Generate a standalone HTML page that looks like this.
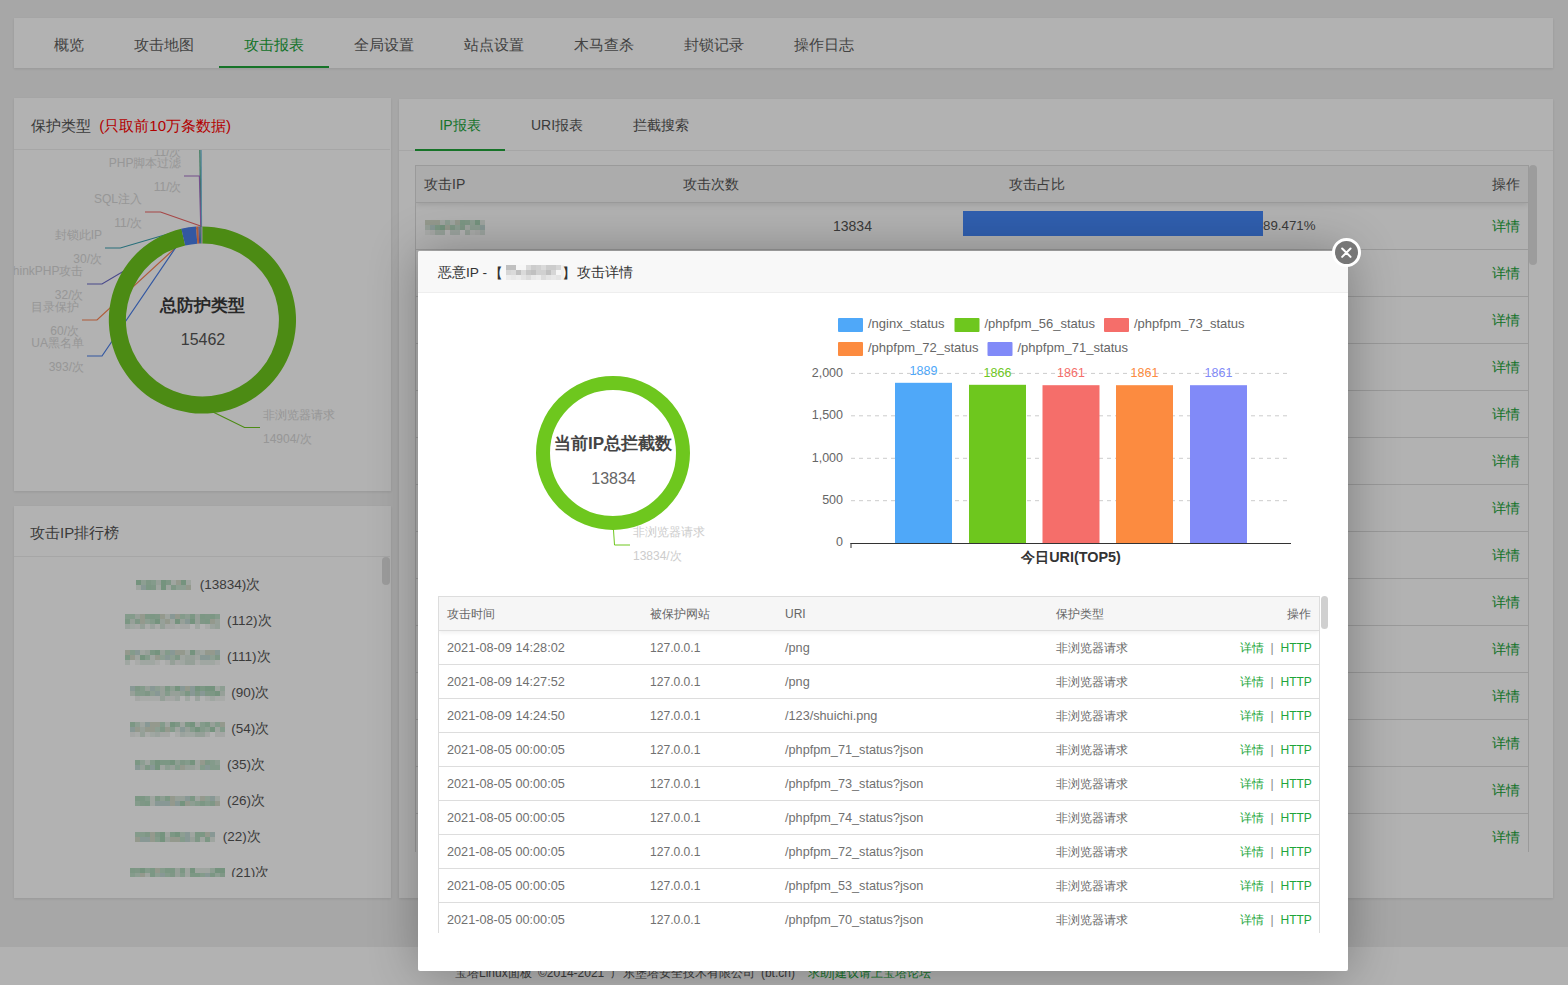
<!DOCTYPE html><html><head><meta charset="utf-8"><style>
*{box-sizing:border-box;margin:0;padding:0}
html,body{width:1568px;height:985px;overflow:hidden}
body{background:#f0f0f0;font-family:"Liberation Sans",sans-serif;color:#555;position:relative}
.abs{position:absolute}
.card{position:absolute;background:#fff;box-shadow:0 1px 3px rgba(0,0,0,.1)}
.nt{position:absolute;top:18px;height:50px;line-height:54px;font-size:15px;color:#606060;text-align:center;white-space:nowrap}
.on{color:#20a53a}
.hd{position:absolute;left:0;right:0;top:0;border-bottom:1px solid #eee}
.ht{position:absolute;font-size:15px;color:#555;white-space:nowrap;line-height:20px}
.red{color:#f00}
.lbl{position:absolute;font-size:12px;color:#d8d8d8;white-space:nowrap;line-height:14px}
.rk{position:absolute;font-size:13.5px;color:#555;line-height:20px;white-space:nowrap}
.bl{position:absolute}
.bl i{position:absolute;display:block}
.tx{position:absolute;white-space:nowrap}
.g{color:#20a53a}
.overlay{position:absolute;left:0;top:0;width:1568px;height:985px;background:rgba(0,0,0,.3)}
</style></head><body>
<div class="card" style="left:14px;top:18px;width:1539px;height:50px"></div>
<div class="nt" style="left:14px;width:110px">概览</div>
<div class="nt" style="left:109px;width:110px">攻击地图</div>
<div class="nt on" style="left:219px;width:110px">攻击报表</div>
<div class="nt" style="left:329px;width:110px">全局设置</div>
<div class="nt" style="left:439px;width:110px">站点设置</div>
<div class="nt" style="left:549px;width:110px">木马查杀</div>
<div class="nt" style="left:659px;width:110px">封锁记录</div>
<div class="nt" style="left:769px;width:110px">操作日志</div>
<div class="abs" style="left:219px;top:66px;width:110px;height:2px;background:#20a53a"></div>
<div class="card" style="left:14px;top:98px;width:376.5px;height:393px"></div>
<div class="abs" style="left:14px;top:149px;width:376px;height:1px;background:#eee"></div>
<div class="ht" style="left:31px;top:115.5px">保护类型&nbsp;&nbsp;<span class="red">(只取前10万条数据)</span></div>
<svg class="abs" style="left:14px;top:150px" width="376" height="340" viewBox="14 150 376 340">
<polyline points="199.9,150 201.0,227" fill="none" stroke="#3ba272" stroke-width="1.2"/>
<polyline points="201.1,150 201.5,227" fill="none" stroke="#73c0de" stroke-width="1.2"/>
<polyline points="184,176 199.4,176 200.8,227" fill="none" stroke="#a673c8" stroke-width="1.2"/>
<polyline points="145,212 160.5,212 200.6,226" fill="none" stroke="#ee6666" stroke-width="1.2"/>
<polyline points="105,248 120.3,248 185,229" fill="none" stroke="#3ba0b0" stroke-width="1.2"/>
<polyline points="87,284 102,284 195,229" fill="none" stroke="#6a6ac8" stroke-width="1.2"/>
<polyline points="82,320 97,320 197,228" fill="none" stroke="#fc8452" stroke-width="1.2"/>
<polyline points="87,356 102,356 189,228" fill="none" stroke="#4a7ee8" stroke-width="1.2"/>
<polyline points="213,412 244.5,427.5 260,427.5" fill="none" stroke="#6ec71e" stroke-width="1.2"/>
<path d="M202.40,226.40 A93.6,93.6 0 1 1 181.36,228.80 L185.20,245.46 A76.5,76.5 0 1 0 202.40,243.50 Z" fill="#6ec71e"/>
<path d="M181.36,228.80 A93.6,93.6 0 0 1 196.13,226.61 L197.27,243.67 A76.5,76.5 0 0 0 185.20,245.46 Z" fill="#4a7ee8"/>
<path d="M196.13,226.61 A93.6,93.6 0 0 1 198.41,226.49 L199.14,243.57 A76.5,76.5 0 0 0 197.27,243.67 Z" fill="#fc8452"/>
<path d="M198.41,226.49 A93.6,93.6 0 0 1 199.62,226.44 L200.13,243.53 A76.5,76.5 0 0 0 199.14,243.57 Z" fill="#6a6ac8"/>
<path d="M199.62,226.44 A93.6,93.6 0 0 1 200.76,226.41 L201.06,243.51 A76.5,76.5 0 0 0 200.13,243.53 Z" fill="#3ba0b0"/>
<path d="M200.76,226.41 A93.6,93.6 0 0 1 201.18,226.41 L201.41,243.51 A76.5,76.5 0 0 0 201.06,243.51 Z" fill="#ee6666"/>
<path d="M201.18,226.41 A93.6,93.6 0 0 1 201.60,226.40 L201.75,243.50 A76.5,76.5 0 0 0 201.41,243.51 Z" fill="#9a60b4"/>
<path d="M201.60,226.40 A93.6,93.6 0 0 1 202.02,226.40 L202.09,243.50 A76.5,76.5 0 0 0 201.75,243.50 Z" fill="#73c0de"/>
<path d="M202.02,226.40 A93.6,93.6 0 0 1 202.40,226.40 L202.40,243.50 A76.5,76.5 0 0 0 202.09,243.50 Z" fill="#91cc75"/>
</svg>
<div class="tx" style="left:102.6px;top:295px;width:200px;text-align:center;font-size:17px;font-weight:bold;color:#3a3a3a;line-height:22px">总防护类型</div>
<div class="tx" style="left:103px;top:331px;width:200px;text-align:center;font-size:16px;color:#555;line-height:18px">15462</div>
<div class="abs" style="left:14px;top:0;width:376px;height:491px;overflow:hidden">
<div class="lbl" style="right:208.5px;top:145.0px">11/次</div>
<div class="lbl" style="right:208.5px;top:156.0px">PHP脚本过滤</div>
<div class="lbl" style="right:208.5px;top:180.0px">11/次</div>
<div class="lbl" style="right:248.0px;top:192.0px">SQL注入</div>
<div class="lbl" style="right:248.0px;top:216.0px">11/次</div>
<div class="lbl" style="right:288.0px;top:228.0px">封锁此IP</div>
<div class="lbl" style="right:288.0px;top:252.0px">30/次</div>
<div class="lbl" style="right:306.5px;top:264.0px">ThinkPHP攻击</div>
<div class="lbl" style="right:306.5px;top:288.0px">32/次</div>
<div class="lbl" style="right:311.0px;top:300.0px">目录保护</div>
<div class="lbl" style="right:311.0px;top:324.0px">60/次</div>
<div class="lbl" style="right:306.0px;top:335.5px">UA黑名单</div>
<div class="lbl" style="right:306.0px;top:360.0px">393/次</div>
</div>
<div class="lbl" style="left:263px;top:408px">非浏览器请求</div>
<div class="lbl" style="left:263px;top:432px">14904/次</div>
<div class="abs" style="left:14px;top:98px;width:376px;height:51px;background:#fff"></div>
<div class="ht" style="left:31px;top:115.5px">保护类型&nbsp;&nbsp;<span class="red">(只取前10万条数据)</span></div>
<div class="abs" style="left:14px;top:149px;width:376px;height:1px;background:#eee"></div>
<div class="card" style="left:14px;top:506px;width:376.5px;height:392px"></div>
<div class="abs" style="left:14px;top:556px;width:376px;height:1px;background:#eee"></div>
<div class="ht" style="left:30px;top:523px">攻击IP排行榜</div>
<div class="abs" style="left:14px;top:557px;width:376px;height:320px;overflow:hidden">
<div class="bl" style="left:122.0px;top:23.0px;width:54.0px;height:10px"><i style="left:0px;top:0px;width:5px;height:5px;background:#a8d3b5"></i><i style="left:0px;top:5px;width:5px;height:5px;background:#e4ece6"></i><i style="left:5px;top:0px;width:5px;height:5px;background:#cbe3d2"></i><i style="left:5px;top:5px;width:5px;height:5px;background:#c3dad6"></i><i style="left:10px;top:0px;width:5px;height:5px;background:#b6d9c0"></i><i style="left:10px;top:5px;width:5px;height:5px;background:#b2d9be"></i><i style="left:15px;top:0px;width:5px;height:5px;background:#bddfc8"></i><i style="left:15px;top:5px;width:5px;height:5px;background:#b6d9c0"></i><i style="left:20px;top:0px;width:5px;height:5px;background:#d8e6dc"></i><i style="left:20px;top:5px;width:5px;height:5px;background:#e4ece6"></i><i style="left:25px;top:0px;width:5px;height:5px;background:#a8d3b5"></i><i style="left:25px;top:5px;width:5px;height:5px;background:#a8d3b5"></i><i style="left:30px;top:0px;width:5px;height:5px;background:#b6d9c0"></i><i style="left:30px;top:5px;width:5px;height:5px;background:#e4ece6"></i><i style="left:35px;top:0px;width:5px;height:5px;background:#e4ece6"></i><i style="left:35px;top:5px;width:5px;height:5px;background:#b6d9c0"></i><i style="left:40px;top:0px;width:5px;height:5px;background:#d5dccb"></i><i style="left:40px;top:5px;width:5px;height:5px;background:#cbe3d2"></i><i style="left:45px;top:0px;width:5px;height:5px;background:#a8d3b5"></i><i style="left:45px;top:5px;width:5px;height:5px;background:#cbe3d2"></i><i style="left:50px;top:0px;width:5px;height:5px;background:#e4ece6"></i><i style="left:50px;top:5px;width:5px;height:5px;background:#d5dccb"></i></div>
<div class="rk" style="left:185.8px;top:18px">(13834)次</div>
<div class="bl" style="left:111.0px;top:56.5px;width:95.0px;height:15px"><i style="left:0px;top:0px;width:5px;height:5px;background:#bddfc8"></i><i style="left:0px;top:5px;width:5px;height:5px;background:#b2d9be"></i><i style="left:0px;top:10px;width:5px;height:5px;background:#dfeae2"></i><i style="left:5px;top:0px;width:5px;height:5px;background:#bddfc8"></i><i style="left:5px;top:5px;width:5px;height:5px;background:#d8e6dc"></i><i style="left:5px;top:10px;width:5px;height:5px;background:#e6efe8"></i><i style="left:10px;top:0px;width:5px;height:5px;background:#d8e6dc"></i><i style="left:10px;top:5px;width:5px;height:5px;background:#b6d9c0"></i><i style="left:10px;top:10px;width:5px;height:5px;background:#ecf0ec"></i><i style="left:15px;top:0px;width:5px;height:5px;background:#d5dccb"></i><i style="left:15px;top:5px;width:5px;height:5px;background:#d5dccb"></i><i style="left:15px;top:10px;width:5px;height:5px;background:#d6e6da"></i><i style="left:20px;top:0px;width:5px;height:5px;background:#b6d9c0"></i><i style="left:20px;top:5px;width:5px;height:5px;background:#cbe3d2"></i><i style="left:20px;top:10px;width:5px;height:5px;background:#f2f5f2"></i><i style="left:25px;top:0px;width:5px;height:5px;background:#b2d9be"></i><i style="left:25px;top:5px;width:5px;height:5px;background:#bddfc8"></i><i style="left:25px;top:10px;width:5px;height:5px;background:#dfeae2"></i><i style="left:30px;top:0px;width:5px;height:5px;background:#b6d9c0"></i><i style="left:30px;top:5px;width:5px;height:5px;background:#a8d3b5"></i><i style="left:30px;top:10px;width:5px;height:5px;background:#f2f5f2"></i><i style="left:35px;top:0px;width:5px;height:5px;background:#d5dccb"></i><i style="left:35px;top:5px;width:5px;height:5px;background:#d8e6dc"></i><i style="left:35px;top:10px;width:5px;height:5px;background:#d6e6da"></i><i style="left:40px;top:0px;width:5px;height:5px;background:#e4ece6"></i><i style="left:40px;top:5px;width:5px;height:5px;background:#d5dccb"></i><i style="left:40px;top:10px;width:5px;height:5px;background:#ecf0ec"></i><i style="left:45px;top:0px;width:5px;height:5px;background:#c3dad6"></i><i style="left:45px;top:5px;width:5px;height:5px;background:#e4ece6"></i><i style="left:45px;top:10px;width:5px;height:5px;background:#ecf0ec"></i><i style="left:50px;top:0px;width:5px;height:5px;background:#d5dccb"></i><i style="left:50px;top:5px;width:5px;height:5px;background:#a8d3b5"></i><i style="left:50px;top:10px;width:5px;height:5px;background:#f2f5f2"></i><i style="left:55px;top:0px;width:5px;height:5px;background:#bddfc8"></i><i style="left:55px;top:5px;width:5px;height:5px;background:#d8e6dc"></i><i style="left:55px;top:10px;width:5px;height:5px;background:#ecf0ec"></i><i style="left:60px;top:0px;width:5px;height:5px;background:#cbe3d2"></i><i style="left:60px;top:5px;width:5px;height:5px;background:#c3dad6"></i><i style="left:60px;top:10px;width:5px;height:5px;background:#ecf0ec"></i><i style="left:65px;top:0px;width:5px;height:5px;background:#b2d9be"></i><i style="left:65px;top:5px;width:5px;height:5px;background:#a8d3b5"></i><i style="left:65px;top:10px;width:5px;height:5px;background:#ffffff"></i><i style="left:70px;top:0px;width:5px;height:5px;background:#d8e6dc"></i><i style="left:70px;top:5px;width:5px;height:5px;background:#d8e6dc"></i><i style="left:70px;top:10px;width:5px;height:5px;background:#e6efe8"></i><i style="left:75px;top:0px;width:5px;height:5px;background:#b2d9be"></i><i style="left:75px;top:5px;width:5px;height:5px;background:#b6d9c0"></i><i style="left:75px;top:10px;width:5px;height:5px;background:#ffffff"></i><i style="left:80px;top:0px;width:5px;height:5px;background:#b6d9c0"></i><i style="left:80px;top:5px;width:5px;height:5px;background:#b2d9be"></i><i style="left:80px;top:10px;width:5px;height:5px;background:#f2f5f2"></i><i style="left:85px;top:0px;width:5px;height:5px;background:#b2d9be"></i><i style="left:85px;top:5px;width:5px;height:5px;background:#d5dccb"></i><i style="left:85px;top:10px;width:5px;height:5px;background:#dfeae2"></i><i style="left:90px;top:0px;width:5px;height:5px;background:#bddfc8"></i><i style="left:90px;top:5px;width:5px;height:5px;background:#d8e6dc"></i><i style="left:90px;top:10px;width:5px;height:5px;background:#d6e6da"></i></div>
<div class="rk" style="left:213px;top:54px">(112)次</div>
<div class="bl" style="left:111.0px;top:92.5px;width:95.0px;height:15px"><i style="left:0px;top:0px;width:5px;height:5px;background:#d5dccb"></i><i style="left:0px;top:5px;width:5px;height:5px;background:#b2d9be"></i><i style="left:0px;top:10px;width:5px;height:5px;background:#e6efe8"></i><i style="left:5px;top:0px;width:5px;height:5px;background:#bddfc8"></i><i style="left:5px;top:5px;width:5px;height:5px;background:#d5dccb"></i><i style="left:5px;top:10px;width:5px;height:5px;background:#ffffff"></i><i style="left:10px;top:0px;width:5px;height:5px;background:#c3dad6"></i><i style="left:10px;top:5px;width:5px;height:5px;background:#e4ece6"></i><i style="left:10px;top:10px;width:5px;height:5px;background:#f2f5f2"></i><i style="left:15px;top:0px;width:5px;height:5px;background:#e4ece6"></i><i style="left:15px;top:5px;width:5px;height:5px;background:#a8d3b5"></i><i style="left:15px;top:10px;width:5px;height:5px;background:#e6efe8"></i><i style="left:20px;top:0px;width:5px;height:5px;background:#d8e6dc"></i><i style="left:20px;top:5px;width:5px;height:5px;background:#bddfc8"></i><i style="left:20px;top:10px;width:5px;height:5px;background:#e6efe8"></i><i style="left:25px;top:0px;width:5px;height:5px;background:#b2d9be"></i><i style="left:25px;top:5px;width:5px;height:5px;background:#e4ece6"></i><i style="left:25px;top:10px;width:5px;height:5px;background:#e6efe8"></i><i style="left:30px;top:0px;width:5px;height:5px;background:#a8d3b5"></i><i style="left:30px;top:5px;width:5px;height:5px;background:#d5dccb"></i><i style="left:30px;top:10px;width:5px;height:5px;background:#f2f5f2"></i><i style="left:35px;top:0px;width:5px;height:5px;background:#d8e6dc"></i><i style="left:35px;top:5px;width:5px;height:5px;background:#cbe3d2"></i><i style="left:35px;top:10px;width:5px;height:5px;background:#ffffff"></i><i style="left:40px;top:0px;width:5px;height:5px;background:#bddfc8"></i><i style="left:40px;top:5px;width:5px;height:5px;background:#c3dad6"></i><i style="left:40px;top:10px;width:5px;height:5px;background:#f2f5f2"></i><i style="left:45px;top:0px;width:5px;height:5px;background:#c3dad6"></i><i style="left:45px;top:5px;width:5px;height:5px;background:#cbe3d2"></i><i style="left:45px;top:10px;width:5px;height:5px;background:#d6e6da"></i><i style="left:50px;top:0px;width:5px;height:5px;background:#d5dccb"></i><i style="left:50px;top:5px;width:5px;height:5px;background:#b6d9c0"></i><i style="left:50px;top:10px;width:5px;height:5px;background:#ecf0ec"></i><i style="left:55px;top:0px;width:5px;height:5px;background:#d5dccb"></i><i style="left:55px;top:5px;width:5px;height:5px;background:#e4ece6"></i><i style="left:55px;top:10px;width:5px;height:5px;background:#e6efe8"></i><i style="left:60px;top:0px;width:5px;height:5px;background:#e4ece6"></i><i style="left:60px;top:5px;width:5px;height:5px;background:#d8e6dc"></i><i style="left:60px;top:10px;width:5px;height:5px;background:#d6e6da"></i><i style="left:65px;top:0px;width:5px;height:5px;background:#a8d3b5"></i><i style="left:65px;top:5px;width:5px;height:5px;background:#d8e6dc"></i><i style="left:65px;top:10px;width:5px;height:5px;background:#d6e6da"></i><i style="left:70px;top:0px;width:5px;height:5px;background:#d8e6dc"></i><i style="left:70px;top:5px;width:5px;height:5px;background:#e4ece6"></i><i style="left:70px;top:10px;width:5px;height:5px;background:#f2f5f2"></i><i style="left:75px;top:0px;width:5px;height:5px;background:#e4ece6"></i><i style="left:75px;top:5px;width:5px;height:5px;background:#c3dad6"></i><i style="left:75px;top:10px;width:5px;height:5px;background:#e6efe8"></i><i style="left:80px;top:0px;width:5px;height:5px;background:#d5dccb"></i><i style="left:80px;top:5px;width:5px;height:5px;background:#c3dad6"></i><i style="left:80px;top:10px;width:5px;height:5px;background:#e6efe8"></i><i style="left:85px;top:0px;width:5px;height:5px;background:#d5dccb"></i><i style="left:85px;top:5px;width:5px;height:5px;background:#cbe3d2"></i><i style="left:85px;top:10px;width:5px;height:5px;background:#e6efe8"></i><i style="left:90px;top:0px;width:5px;height:5px;background:#c3dad6"></i><i style="left:90px;top:5px;width:5px;height:5px;background:#b6d9c0"></i><i style="left:90px;top:10px;width:5px;height:5px;background:#f2f5f2"></i></div>
<div class="rk" style="left:213px;top:90px">(111)次</div>
<div class="bl" style="left:115.5px;top:128.5px;width:94.9px;height:15px"><i style="left:0px;top:0px;width:5px;height:5px;background:#c3dad6"></i><i style="left:0px;top:5px;width:5px;height:5px;background:#d8e6dc"></i><i style="left:0px;top:10px;width:5px;height:5px;background:#ffffff"></i><i style="left:5px;top:0px;width:5px;height:5px;background:#b6d9c0"></i><i style="left:5px;top:5px;width:5px;height:5px;background:#bddfc8"></i><i style="left:5px;top:10px;width:5px;height:5px;background:#ecf0ec"></i><i style="left:10px;top:0px;width:5px;height:5px;background:#bddfc8"></i><i style="left:10px;top:5px;width:5px;height:5px;background:#bddfc8"></i><i style="left:10px;top:10px;width:5px;height:5px;background:#f2f5f2"></i><i style="left:15px;top:0px;width:5px;height:5px;background:#d8e6dc"></i><i style="left:15px;top:5px;width:5px;height:5px;background:#b6d9c0"></i><i style="left:15px;top:10px;width:5px;height:5px;background:#f2f5f2"></i><i style="left:20px;top:0px;width:5px;height:5px;background:#c3dad6"></i><i style="left:20px;top:5px;width:5px;height:5px;background:#cbe3d2"></i><i style="left:20px;top:10px;width:5px;height:5px;background:#f2f5f2"></i><i style="left:25px;top:0px;width:5px;height:5px;background:#cbe3d2"></i><i style="left:25px;top:5px;width:5px;height:5px;background:#c3dad6"></i><i style="left:25px;top:10px;width:5px;height:5px;background:#f2f5f2"></i><i style="left:30px;top:0px;width:5px;height:5px;background:#d8e6dc"></i><i style="left:30px;top:5px;width:5px;height:5px;background:#d8e6dc"></i><i style="left:30px;top:10px;width:5px;height:5px;background:#d6e6da"></i><i style="left:35px;top:0px;width:5px;height:5px;background:#b2d9be"></i><i style="left:35px;top:5px;width:5px;height:5px;background:#bddfc8"></i><i style="left:35px;top:10px;width:5px;height:5px;background:#ecf0ec"></i><i style="left:40px;top:0px;width:5px;height:5px;background:#cbe3d2"></i><i style="left:40px;top:5px;width:5px;height:5px;background:#d8e6dc"></i><i style="left:40px;top:10px;width:5px;height:5px;background:#ecf0ec"></i><i style="left:45px;top:0px;width:5px;height:5px;background:#a8d3b5"></i><i style="left:45px;top:5px;width:5px;height:5px;background:#d8e6dc"></i><i style="left:45px;top:10px;width:5px;height:5px;background:#dfeae2"></i><i style="left:50px;top:0px;width:5px;height:5px;background:#c3dad6"></i><i style="left:50px;top:5px;width:5px;height:5px;background:#cbe3d2"></i><i style="left:50px;top:10px;width:5px;height:5px;background:#ffffff"></i><i style="left:55px;top:0px;width:5px;height:5px;background:#d5dccb"></i><i style="left:55px;top:5px;width:5px;height:5px;background:#b2d9be"></i><i style="left:55px;top:10px;width:5px;height:5px;background:#e6efe8"></i><i style="left:60px;top:0px;width:5px;height:5px;background:#c3dad6"></i><i style="left:60px;top:5px;width:5px;height:5px;background:#c3dad6"></i><i style="left:60px;top:10px;width:5px;height:5px;background:#ffffff"></i><i style="left:65px;top:0px;width:5px;height:5px;background:#a8d3b5"></i><i style="left:65px;top:5px;width:5px;height:5px;background:#b6d9c0"></i><i style="left:65px;top:10px;width:5px;height:5px;background:#dfeae2"></i><i style="left:70px;top:0px;width:5px;height:5px;background:#b2d9be"></i><i style="left:70px;top:5px;width:5px;height:5px;background:#c3dad6"></i><i style="left:70px;top:10px;width:5px;height:5px;background:#ffffff"></i><i style="left:75px;top:0px;width:5px;height:5px;background:#a8d3b5"></i><i style="left:75px;top:5px;width:5px;height:5px;background:#b6d9c0"></i><i style="left:75px;top:10px;width:5px;height:5px;background:#f2f5f2"></i><i style="left:80px;top:0px;width:5px;height:5px;background:#a8d3b5"></i><i style="left:80px;top:5px;width:5px;height:5px;background:#b2d9be"></i><i style="left:80px;top:10px;width:5px;height:5px;background:#e6efe8"></i><i style="left:85px;top:0px;width:5px;height:5px;background:#e4ece6"></i><i style="left:85px;top:5px;width:5px;height:5px;background:#a8d3b5"></i><i style="left:85px;top:10px;width:5px;height:5px;background:#f2f5f2"></i><i style="left:90px;top:0px;width:5px;height:5px;background:#cbe3d2"></i><i style="left:90px;top:5px;width:5px;height:5px;background:#d8e6dc"></i><i style="left:90px;top:10px;width:5px;height:5px;background:#f2f5f2"></i></div>
<div class="rk" style="left:217.3px;top:126px">(90)次</div>
<div class="bl" style="left:115.5px;top:164.5px;width:94.9px;height:15px"><i style="left:0px;top:0px;width:5px;height:5px;background:#b2d9be"></i><i style="left:0px;top:5px;width:5px;height:5px;background:#c3dad6"></i><i style="left:0px;top:10px;width:5px;height:5px;background:#ecf0ec"></i><i style="left:5px;top:0px;width:5px;height:5px;background:#cbe3d2"></i><i style="left:5px;top:5px;width:5px;height:5px;background:#d5dccb"></i><i style="left:5px;top:10px;width:5px;height:5px;background:#f2f5f2"></i><i style="left:10px;top:0px;width:5px;height:5px;background:#e4ece6"></i><i style="left:10px;top:5px;width:5px;height:5px;background:#d8e6dc"></i><i style="left:10px;top:10px;width:5px;height:5px;background:#d6e6da"></i><i style="left:15px;top:0px;width:5px;height:5px;background:#c3dad6"></i><i style="left:15px;top:5px;width:5px;height:5px;background:#d5dccb"></i><i style="left:15px;top:10px;width:5px;height:5px;background:#f2f5f2"></i><i style="left:20px;top:0px;width:5px;height:5px;background:#d5dccb"></i><i style="left:20px;top:5px;width:5px;height:5px;background:#d5dccb"></i><i style="left:20px;top:10px;width:5px;height:5px;background:#e6efe8"></i><i style="left:25px;top:0px;width:5px;height:5px;background:#d5dccb"></i><i style="left:25px;top:5px;width:5px;height:5px;background:#cbe3d2"></i><i style="left:25px;top:10px;width:5px;height:5px;background:#dfeae2"></i><i style="left:30px;top:0px;width:5px;height:5px;background:#bddfc8"></i><i style="left:30px;top:5px;width:5px;height:5px;background:#b6d9c0"></i><i style="left:30px;top:10px;width:5px;height:5px;background:#ecf0ec"></i><i style="left:35px;top:0px;width:5px;height:5px;background:#e4ece6"></i><i style="left:35px;top:5px;width:5px;height:5px;background:#d5dccb"></i><i style="left:35px;top:10px;width:5px;height:5px;background:#ecf0ec"></i><i style="left:40px;top:0px;width:5px;height:5px;background:#a8d3b5"></i><i style="left:40px;top:5px;width:5px;height:5px;background:#bddfc8"></i><i style="left:40px;top:10px;width:5px;height:5px;background:#ffffff"></i><i style="left:45px;top:0px;width:5px;height:5px;background:#b6d9c0"></i><i style="left:45px;top:5px;width:5px;height:5px;background:#e4ece6"></i><i style="left:45px;top:10px;width:5px;height:5px;background:#f2f5f2"></i><i style="left:50px;top:0px;width:5px;height:5px;background:#e4ece6"></i><i style="left:50px;top:5px;width:5px;height:5px;background:#c3dad6"></i><i style="left:50px;top:10px;width:5px;height:5px;background:#dfeae2"></i><i style="left:55px;top:0px;width:5px;height:5px;background:#b2d9be"></i><i style="left:55px;top:5px;width:5px;height:5px;background:#d8e6dc"></i><i style="left:55px;top:10px;width:5px;height:5px;background:#e6efe8"></i><i style="left:60px;top:0px;width:5px;height:5px;background:#a8d3b5"></i><i style="left:60px;top:5px;width:5px;height:5px;background:#bddfc8"></i><i style="left:60px;top:10px;width:5px;height:5px;background:#e6efe8"></i><i style="left:65px;top:0px;width:5px;height:5px;background:#e4ece6"></i><i style="left:65px;top:5px;width:5px;height:5px;background:#a8d3b5"></i><i style="left:65px;top:10px;width:5px;height:5px;background:#d6e6da"></i><i style="left:70px;top:0px;width:5px;height:5px;background:#bddfc8"></i><i style="left:70px;top:5px;width:5px;height:5px;background:#bddfc8"></i><i style="left:70px;top:10px;width:5px;height:5px;background:#d6e6da"></i><i style="left:75px;top:0px;width:5px;height:5px;background:#b2d9be"></i><i style="left:75px;top:5px;width:5px;height:5px;background:#cbe3d2"></i><i style="left:75px;top:10px;width:5px;height:5px;background:#ecf0ec"></i><i style="left:80px;top:0px;width:5px;height:5px;background:#d8e6dc"></i><i style="left:80px;top:5px;width:5px;height:5px;background:#a8d3b5"></i><i style="left:80px;top:10px;width:5px;height:5px;background:#ffffff"></i><i style="left:85px;top:0px;width:5px;height:5px;background:#bddfc8"></i><i style="left:85px;top:5px;width:5px;height:5px;background:#e4ece6"></i><i style="left:85px;top:10px;width:5px;height:5px;background:#ecf0ec"></i><i style="left:90px;top:0px;width:5px;height:5px;background:#d5dccb"></i><i style="left:90px;top:5px;width:5px;height:5px;background:#bddfc8"></i><i style="left:90px;top:10px;width:5px;height:5px;background:#ecf0ec"></i></div>
<div class="rk" style="left:217.3px;top:162px">(54)次</div>
<div class="bl" style="left:120.6px;top:203.0px;width:86.4px;height:10px"><i style="left:0px;top:0px;width:5px;height:5px;background:#b2d9be"></i><i style="left:0px;top:5px;width:5px;height:5px;background:#c3dad6"></i><i style="left:5px;top:0px;width:5px;height:5px;background:#cbe3d2"></i><i style="left:5px;top:5px;width:5px;height:5px;background:#d8e6dc"></i><i style="left:10px;top:0px;width:5px;height:5px;background:#e4ece6"></i><i style="left:10px;top:5px;width:5px;height:5px;background:#b6d9c0"></i><i style="left:15px;top:0px;width:5px;height:5px;background:#bddfc8"></i><i style="left:15px;top:5px;width:5px;height:5px;background:#c3dad6"></i><i style="left:20px;top:0px;width:5px;height:5px;background:#a8d3b5"></i><i style="left:20px;top:5px;width:5px;height:5px;background:#a8d3b5"></i><i style="left:25px;top:0px;width:5px;height:5px;background:#b2d9be"></i><i style="left:25px;top:5px;width:5px;height:5px;background:#e4ece6"></i><i style="left:30px;top:0px;width:5px;height:5px;background:#b2d9be"></i><i style="left:30px;top:5px;width:5px;height:5px;background:#cbe3d2"></i><i style="left:35px;top:0px;width:5px;height:5px;background:#a8d3b5"></i><i style="left:35px;top:5px;width:5px;height:5px;background:#d8e6dc"></i><i style="left:40px;top:0px;width:5px;height:5px;background:#cbe3d2"></i><i style="left:40px;top:5px;width:5px;height:5px;background:#bddfc8"></i><i style="left:45px;top:0px;width:5px;height:5px;background:#b6d9c0"></i><i style="left:45px;top:5px;width:5px;height:5px;background:#d5dccb"></i><i style="left:50px;top:0px;width:5px;height:5px;background:#bddfc8"></i><i style="left:50px;top:5px;width:5px;height:5px;background:#d8e6dc"></i><i style="left:55px;top:0px;width:5px;height:5px;background:#a8d3b5"></i><i style="left:55px;top:5px;width:5px;height:5px;background:#d8e6dc"></i><i style="left:60px;top:0px;width:5px;height:5px;background:#e4ece6"></i><i style="left:60px;top:5px;width:5px;height:5px;background:#e4ece6"></i><i style="left:65px;top:0px;width:5px;height:5px;background:#d5dccb"></i><i style="left:65px;top:5px;width:5px;height:5px;background:#bddfc8"></i><i style="left:70px;top:0px;width:5px;height:5px;background:#b6d9c0"></i><i style="left:70px;top:5px;width:5px;height:5px;background:#c3dad6"></i><i style="left:75px;top:0px;width:5px;height:5px;background:#bddfc8"></i><i style="left:75px;top:5px;width:5px;height:5px;background:#bddfc8"></i><i style="left:80px;top:0px;width:5px;height:5px;background:#cbe3d2"></i><i style="left:80px;top:5px;width:5px;height:5px;background:#bddfc8"></i></div>
<div class="rk" style="left:213px;top:198px">(35)次</div>
<div class="bl" style="left:120.6px;top:239.0px;width:86.4px;height:10px"><i style="left:0px;top:0px;width:5px;height:5px;background:#b2d9be"></i><i style="left:0px;top:5px;width:5px;height:5px;background:#bddfc8"></i><i style="left:5px;top:0px;width:5px;height:5px;background:#b2d9be"></i><i style="left:5px;top:5px;width:5px;height:5px;background:#b6d9c0"></i><i style="left:10px;top:0px;width:5px;height:5px;background:#bddfc8"></i><i style="left:10px;top:5px;width:5px;height:5px;background:#b2d9be"></i><i style="left:15px;top:0px;width:5px;height:5px;background:#e4ece6"></i><i style="left:15px;top:5px;width:5px;height:5px;background:#e4ece6"></i><i style="left:20px;top:0px;width:5px;height:5px;background:#b6d9c0"></i><i style="left:20px;top:5px;width:5px;height:5px;background:#c3dad6"></i><i style="left:25px;top:0px;width:5px;height:5px;background:#cbe3d2"></i><i style="left:25px;top:5px;width:5px;height:5px;background:#c3dad6"></i><i style="left:30px;top:0px;width:5px;height:5px;background:#b2d9be"></i><i style="left:30px;top:5px;width:5px;height:5px;background:#c3dad6"></i><i style="left:35px;top:0px;width:5px;height:5px;background:#d5dccb"></i><i style="left:35px;top:5px;width:5px;height:5px;background:#d5dccb"></i><i style="left:40px;top:0px;width:5px;height:5px;background:#d8e6dc"></i><i style="left:40px;top:5px;width:5px;height:5px;background:#c3dad6"></i><i style="left:45px;top:0px;width:5px;height:5px;background:#d8e6dc"></i><i style="left:45px;top:5px;width:5px;height:5px;background:#a8d3b5"></i><i style="left:50px;top:0px;width:5px;height:5px;background:#c3dad6"></i><i style="left:50px;top:5px;width:5px;height:5px;background:#d5dccb"></i><i style="left:55px;top:0px;width:5px;height:5px;background:#b2d9be"></i><i style="left:55px;top:5px;width:5px;height:5px;background:#cbe3d2"></i><i style="left:60px;top:0px;width:5px;height:5px;background:#e4ece6"></i><i style="left:60px;top:5px;width:5px;height:5px;background:#bddfc8"></i><i style="left:65px;top:0px;width:5px;height:5px;background:#d5dccb"></i><i style="left:65px;top:5px;width:5px;height:5px;background:#b2d9be"></i><i style="left:70px;top:0px;width:5px;height:5px;background:#cbe3d2"></i><i style="left:70px;top:5px;width:5px;height:5px;background:#bddfc8"></i><i style="left:75px;top:0px;width:5px;height:5px;background:#c3dad6"></i><i style="left:75px;top:5px;width:5px;height:5px;background:#b6d9c0"></i><i style="left:80px;top:0px;width:5px;height:5px;background:#e4ece6"></i><i style="left:80px;top:5px;width:5px;height:5px;background:#d5dccb"></i></div>
<div class="rk" style="left:213px;top:234px">(26)次</div>
<div class="bl" style="left:120.6px;top:275.0px;width:81.1px;height:10px"><i style="left:0px;top:0px;width:5px;height:5px;background:#bddfc8"></i><i style="left:0px;top:5px;width:5px;height:5px;background:#d5dccb"></i><i style="left:5px;top:0px;width:5px;height:5px;background:#bddfc8"></i><i style="left:5px;top:5px;width:5px;height:5px;background:#c3dad6"></i><i style="left:10px;top:0px;width:5px;height:5px;background:#b6d9c0"></i><i style="left:10px;top:5px;width:5px;height:5px;background:#c3dad6"></i><i style="left:15px;top:0px;width:5px;height:5px;background:#d5dccb"></i><i style="left:15px;top:5px;width:5px;height:5px;background:#d5dccb"></i><i style="left:20px;top:0px;width:5px;height:5px;background:#b6d9c0"></i><i style="left:20px;top:5px;width:5px;height:5px;background:#bddfc8"></i><i style="left:25px;top:0px;width:5px;height:5px;background:#a8d3b5"></i><i style="left:25px;top:5px;width:5px;height:5px;background:#a8d3b5"></i><i style="left:30px;top:0px;width:5px;height:5px;background:#e4ece6"></i><i style="left:30px;top:5px;width:5px;height:5px;background:#d8e6dc"></i><i style="left:35px;top:0px;width:5px;height:5px;background:#b2d9be"></i><i style="left:35px;top:5px;width:5px;height:5px;background:#d5dccb"></i><i style="left:40px;top:0px;width:5px;height:5px;background:#a8d3b5"></i><i style="left:40px;top:5px;width:5px;height:5px;background:#d5dccb"></i><i style="left:45px;top:0px;width:5px;height:5px;background:#cbe3d2"></i><i style="left:45px;top:5px;width:5px;height:5px;background:#bddfc8"></i><i style="left:50px;top:0px;width:5px;height:5px;background:#c3dad6"></i><i style="left:50px;top:5px;width:5px;height:5px;background:#c3dad6"></i><i style="left:55px;top:0px;width:5px;height:5px;background:#e4ece6"></i><i style="left:55px;top:5px;width:5px;height:5px;background:#d8e6dc"></i><i style="left:60px;top:0px;width:5px;height:5px;background:#b2d9be"></i><i style="left:60px;top:5px;width:5px;height:5px;background:#b6d9c0"></i><i style="left:65px;top:0px;width:5px;height:5px;background:#b2d9be"></i><i style="left:65px;top:5px;width:5px;height:5px;background:#e4ece6"></i><i style="left:70px;top:0px;width:5px;height:5px;background:#d5dccb"></i><i style="left:70px;top:5px;width:5px;height:5px;background:#b2d9be"></i><i style="left:75px;top:0px;width:5px;height:5px;background:#c3dad6"></i><i style="left:75px;top:5px;width:5px;height:5px;background:#e4ece6"></i></div>
<div class="rk" style="left:208.7px;top:270px">(22)次</div>
<div class="bl" style="left:115.5px;top:311.0px;width:94.9px;height:10px"><i style="left:0px;top:0px;width:5px;height:5px;background:#b2d9be"></i><i style="left:0px;top:5px;width:5px;height:5px;background:#bddfc8"></i><i style="left:5px;top:0px;width:5px;height:5px;background:#b6d9c0"></i><i style="left:5px;top:5px;width:5px;height:5px;background:#cbe3d2"></i><i style="left:10px;top:0px;width:5px;height:5px;background:#a8d3b5"></i><i style="left:10px;top:5px;width:5px;height:5px;background:#d5dccb"></i><i style="left:15px;top:0px;width:5px;height:5px;background:#bddfc8"></i><i style="left:15px;top:5px;width:5px;height:5px;background:#e4ece6"></i><i style="left:20px;top:0px;width:5px;height:5px;background:#b2d9be"></i><i style="left:20px;top:5px;width:5px;height:5px;background:#b2d9be"></i><i style="left:25px;top:0px;width:5px;height:5px;background:#d5dccb"></i><i style="left:25px;top:5px;width:5px;height:5px;background:#cbe3d2"></i><i style="left:30px;top:0px;width:5px;height:5px;background:#bddfc8"></i><i style="left:30px;top:5px;width:5px;height:5px;background:#c3dad6"></i><i style="left:35px;top:0px;width:5px;height:5px;background:#b2d9be"></i><i style="left:35px;top:5px;width:5px;height:5px;background:#bddfc8"></i><i style="left:40px;top:0px;width:5px;height:5px;background:#b2d9be"></i><i style="left:40px;top:5px;width:5px;height:5px;background:#b6d9c0"></i><i style="left:45px;top:0px;width:5px;height:5px;background:#d8e6dc"></i><i style="left:45px;top:5px;width:5px;height:5px;background:#d8e6dc"></i><i style="left:50px;top:0px;width:5px;height:5px;background:#b2d9be"></i><i style="left:50px;top:5px;width:5px;height:5px;background:#bddfc8"></i><i style="left:55px;top:0px;width:5px;height:5px;background:#e4ece6"></i><i style="left:55px;top:5px;width:5px;height:5px;background:#e4ece6"></i><i style="left:60px;top:0px;width:5px;height:5px;background:#a8d3b5"></i><i style="left:60px;top:5px;width:5px;height:5px;background:#b2d9be"></i><i style="left:65px;top:0px;width:5px;height:5px;background:#e4ece6"></i><i style="left:65px;top:5px;width:5px;height:5px;background:#b2d9be"></i><i style="left:70px;top:0px;width:5px;height:5px;background:#e4ece6"></i><i style="left:70px;top:5px;width:5px;height:5px;background:#bddfc8"></i><i style="left:75px;top:0px;width:5px;height:5px;background:#e4ece6"></i><i style="left:75px;top:5px;width:5px;height:5px;background:#c3dad6"></i><i style="left:80px;top:0px;width:5px;height:5px;background:#cbe3d2"></i><i style="left:80px;top:5px;width:5px;height:5px;background:#b2d9be"></i><i style="left:85px;top:0px;width:5px;height:5px;background:#a8d3b5"></i><i style="left:85px;top:5px;width:5px;height:5px;background:#cbe3d2"></i><i style="left:90px;top:0px;width:5px;height:5px;background:#a8d3b5"></i><i style="left:90px;top:5px;width:5px;height:5px;background:#b6d9c0"></i></div>
<div class="rk" style="left:217.3px;top:306px">(21)次</div>
</div>
<div class="abs" style="left:382px;top:557px;width:8px;height:28px;border-radius:4px;background:#e0e0e0"></div>
<div class="card" style="left:398.5px;top:99px;width:1154.5px;height:799px"></div>
<div class="abs" style="left:399px;top:150px;width:1154px;height:1px;background:#eee"></div>
<div class="tx g" style="left:415px;top:115px;width:90px;text-align:center;font-size:14px;line-height:20px">IP报表</div>
<div class="abs" style="left:415px;top:149px;width:90px;height:2px;background:#20a53a"></div>
<div class="tx" style="left:505px;top:115px;width:104px;text-align:center;font-size:14px;line-height:20px">URI报表</div>
<div class="tx" style="left:609px;top:115px;width:104px;text-align:center;font-size:14px;line-height:20px">拦截搜索</div>
<div class="abs" style="left:415px;top:165px;width:1114px;height:687px;overflow:hidden;border-left:1px solid #ddd;border-right:1px solid #ddd">
<div class="abs" style="left:0;top:38px;width:1112px;height:47px;border-bottom:1px solid #ddd"></div>
<div class="tx g" style="right:8px;top:51px;font-size:14px;line-height:20px">详情</div>
<div class="abs" style="left:0;top:85px;width:1112px;height:47px;border-bottom:1px solid #ddd"></div>
<div class="tx g" style="right:8px;top:98px;font-size:14px;line-height:20px">详情</div>
<div class="abs" style="left:0;top:132px;width:1112px;height:47px;border-bottom:1px solid #ddd"></div>
<div class="tx g" style="right:8px;top:145px;font-size:14px;line-height:20px">详情</div>
<div class="abs" style="left:0;top:179px;width:1112px;height:47px;border-bottom:1px solid #ddd"></div>
<div class="tx g" style="right:8px;top:192px;font-size:14px;line-height:20px">详情</div>
<div class="abs" style="left:0;top:226px;width:1112px;height:47px;border-bottom:1px solid #ddd"></div>
<div class="tx g" style="right:8px;top:239px;font-size:14px;line-height:20px">详情</div>
<div class="abs" style="left:0;top:273px;width:1112px;height:47px;border-bottom:1px solid #ddd"></div>
<div class="tx g" style="right:8px;top:286px;font-size:14px;line-height:20px">详情</div>
<div class="abs" style="left:0;top:320px;width:1112px;height:47px;border-bottom:1px solid #ddd"></div>
<div class="tx g" style="right:8px;top:333px;font-size:14px;line-height:20px">详情</div>
<div class="abs" style="left:0;top:367px;width:1112px;height:47px;border-bottom:1px solid #ddd"></div>
<div class="tx g" style="right:8px;top:380px;font-size:14px;line-height:20px">详情</div>
<div class="abs" style="left:0;top:414px;width:1112px;height:47px;border-bottom:1px solid #ddd"></div>
<div class="tx g" style="right:8px;top:427px;font-size:14px;line-height:20px">详情</div>
<div class="abs" style="left:0;top:461px;width:1112px;height:47px;border-bottom:1px solid #ddd"></div>
<div class="tx g" style="right:8px;top:474px;font-size:14px;line-height:20px">详情</div>
<div class="abs" style="left:0;top:508px;width:1112px;height:47px;border-bottom:1px solid #ddd"></div>
<div class="tx g" style="right:8px;top:521px;font-size:14px;line-height:20px">详情</div>
<div class="abs" style="left:0;top:555px;width:1112px;height:47px;border-bottom:1px solid #ddd"></div>
<div class="tx g" style="right:8px;top:568px;font-size:14px;line-height:20px">详情</div>
<div class="abs" style="left:0;top:602px;width:1112px;height:47px;border-bottom:1px solid #ddd"></div>
<div class="tx g" style="right:8px;top:615px;font-size:14px;line-height:20px">详情</div>
<div class="abs" style="left:0;top:649px;width:1112px;height:47px;border-bottom:1px solid #ddd"></div>
<div class="tx g" style="right:8px;top:662px;font-size:14px;line-height:20px">详情</div>
<div class="abs" style="left:0;top:0;width:1112px;height:38px;background:#f6f6f6;border-top:1px solid #ddd;border-bottom:1px solid #ddd;box-shadow:0 2px 5px rgba(0,0,0,.1)"></div>
<div class="tx" style="left:8px;top:9px;font-size:14px;line-height:20px">攻击IP</div>
<div class="tx" style="left:267px;top:9px;font-size:14px;line-height:20px">攻击次数</div>
<div class="tx" style="left:593px;top:9px;font-size:14px;line-height:20px">攻击占比</div>
<div class="tx" style="right:8px;top:9px;font-size:14px;line-height:20px">操作</div>
<div class="bl" style="left:9.0px;top:54.5px;width:60.0px;height:15px"><i style="left:0px;top:0px;width:5px;height:5px;background:#d5dccb"></i><i style="left:0px;top:5px;width:5px;height:5px;background:#d8e6dc"></i><i style="left:0px;top:10px;width:5px;height:5px;background:#f2f5f2"></i><i style="left:5px;top:0px;width:5px;height:5px;background:#d5dccb"></i><i style="left:5px;top:5px;width:5px;height:5px;background:#c3dad6"></i><i style="left:5px;top:10px;width:5px;height:5px;background:#ecf0ec"></i><i style="left:10px;top:0px;width:5px;height:5px;background:#d5dccb"></i><i style="left:10px;top:5px;width:5px;height:5px;background:#b2d9be"></i><i style="left:10px;top:10px;width:5px;height:5px;background:#d6e6da"></i><i style="left:15px;top:0px;width:5px;height:5px;background:#e4ece6"></i><i style="left:15px;top:5px;width:5px;height:5px;background:#a8d3b5"></i><i style="left:15px;top:10px;width:5px;height:5px;background:#d6e6da"></i><i style="left:20px;top:0px;width:5px;height:5px;background:#cbe3d2"></i><i style="left:20px;top:5px;width:5px;height:5px;background:#d5dccb"></i><i style="left:20px;top:10px;width:5px;height:5px;background:#ffffff"></i><i style="left:25px;top:0px;width:5px;height:5px;background:#e4ece6"></i><i style="left:25px;top:5px;width:5px;height:5px;background:#b6d9c0"></i><i style="left:25px;top:10px;width:5px;height:5px;background:#dfeae2"></i><i style="left:30px;top:0px;width:5px;height:5px;background:#d5dccb"></i><i style="left:30px;top:5px;width:5px;height:5px;background:#cbe3d2"></i><i style="left:30px;top:10px;width:5px;height:5px;background:#dfeae2"></i><i style="left:35px;top:0px;width:5px;height:5px;background:#b2d9be"></i><i style="left:35px;top:5px;width:5px;height:5px;background:#b6d9c0"></i><i style="left:35px;top:10px;width:5px;height:5px;background:#ffffff"></i><i style="left:40px;top:0px;width:5px;height:5px;background:#b6d9c0"></i><i style="left:40px;top:5px;width:5px;height:5px;background:#e4ece6"></i><i style="left:40px;top:10px;width:5px;height:5px;background:#d6e6da"></i><i style="left:45px;top:0px;width:5px;height:5px;background:#cbe3d2"></i><i style="left:45px;top:5px;width:5px;height:5px;background:#cbe3d2"></i><i style="left:45px;top:10px;width:5px;height:5px;background:#f2f5f2"></i><i style="left:50px;top:0px;width:5px;height:5px;background:#a8d3b5"></i><i style="left:50px;top:5px;width:5px;height:5px;background:#cbe3d2"></i><i style="left:50px;top:10px;width:5px;height:5px;background:#ecf0ec"></i><i style="left:55px;top:0px;width:5px;height:5px;background:#e4ece6"></i><i style="left:55px;top:5px;width:5px;height:5px;background:#c3dad6"></i><i style="left:55px;top:10px;width:5px;height:5px;background:#dfeae2"></i></div>
<div class="tx" style="left:417px;top:51px;font-size:14px;line-height:20px">13834</div>
<div class="abs" style="left:547px;top:46px;width:300px;height:25px;background:#4589fb"></div>
<div class="tx" style="left:847px;top:51px;font-size:13.3px;line-height:20px">89.471%</div>
</div>
<div class="abs" style="left:1529px;top:165px;width:8px;height:100px;border-radius:4px;background:#e0e0e0"></div>
<div class="abs" style="left:0;top:947px;width:1568px;height:38px;background:#fff"></div>
<div class="tx" style="left:455px;top:964px;font-size:12px;color:#555;line-height:18px;word-spacing:3px">宝塔Linux面板 ©2014-2021 广东堡塔安全技术有限公司 (bt.cn)</div>
<div class="tx g" style="left:807.5px;top:964px;font-size:12px;line-height:18px">求助|建议请上宝塔论坛</div>
<div class="overlay"></div>
<div class="abs" style="left:418px;top:250.5px;width:930px;height:720px;background:#fff;border-radius:2px;box-shadow:1px 1px 50px rgba(0,0,0,.3)"></div>
<div class="abs" style="left:418px;top:250.5px;width:930px;height:42px;background:#f8f8f8;border-bottom:1px solid #eee;border-radius:2px 2px 0 0"></div>
<div class="tx" style="left:438px;top:263.5px;font-size:13.7px;color:#333;line-height:18px">恶意IP -</div>
<div class="tx" style="left:488.5px;top:264.5px;font-size:13.7px;color:#333;line-height:18px">【</div>
<div class="bl" style="left:506.0px;top:264.9px;width:55.0px;height:15px"><i style="left:0px;top:0px;width:5px;height:5px;background:#c0c0c0"></i><i style="left:0px;top:5px;width:5px;height:5px;background:#d6d6d6"></i><i style="left:0px;top:10px;width:5px;height:5px;background:#ececec"></i><i style="left:5px;top:0px;width:5px;height:5px;background:#c0c0c0"></i><i style="left:5px;top:5px;width:5px;height:5px;background:#dadada"></i><i style="left:5px;top:10px;width:5px;height:5px;background:#e8e8e8"></i><i style="left:10px;top:0px;width:5px;height:5px;background:#f6f6f6"></i><i style="left:10px;top:5px;width:5px;height:5px;background:#c0c0c0"></i><i style="left:10px;top:10px;width:5px;height:5px;background:#ececec"></i><i style="left:15px;top:0px;width:5px;height:5px;background:#f6f6f6"></i><i style="left:15px;top:5px;width:5px;height:5px;background:#dadada"></i><i style="left:15px;top:10px;width:5px;height:5px;background:#e4e4e4"></i><i style="left:20px;top:0px;width:5px;height:5px;background:#dadada"></i><i style="left:20px;top:5px;width:5px;height:5px;background:#c6c6c6"></i><i style="left:20px;top:10px;width:5px;height:5px;background:#dcdcdc"></i><i style="left:25px;top:0px;width:5px;height:5px;background:#cccccc"></i><i style="left:25px;top:5px;width:5px;height:5px;background:#c0c0c0"></i><i style="left:25px;top:10px;width:5px;height:5px;background:#e8e8e8"></i><i style="left:30px;top:0px;width:5px;height:5px;background:#d0d0d0"></i><i style="left:30px;top:5px;width:5px;height:5px;background:#d0d0d0"></i><i style="left:30px;top:10px;width:5px;height:5px;background:#ececec"></i><i style="left:35px;top:0px;width:5px;height:5px;background:#dadada"></i><i style="left:35px;top:5px;width:5px;height:5px;background:#d0d0d0"></i><i style="left:35px;top:10px;width:5px;height:5px;background:#dcdcdc"></i><i style="left:40px;top:0px;width:5px;height:5px;background:#cccccc"></i><i style="left:40px;top:5px;width:5px;height:5px;background:#c0c0c0"></i><i style="left:40px;top:10px;width:5px;height:5px;background:#e4e4e4"></i><i style="left:45px;top:0px;width:5px;height:5px;background:#cccccc"></i><i style="left:45px;top:5px;width:5px;height:5px;background:#d6d6d6"></i><i style="left:45px;top:10px;width:5px;height:5px;background:#e8e8e8"></i><i style="left:50px;top:0px;width:5px;height:5px;background:#d6d6d6"></i><i style="left:50px;top:5px;width:5px;height:5px;background:#f6f6f6"></i><i style="left:50px;top:10px;width:5px;height:5px;background:#e4e4e4"></i></div>
<div class="abs" style="left:561px;top:264.9px;width:2.5px;height:15px;background:#f0f0f0"></div>
<div class="tx" style="left:561.5px;top:264.5px;font-size:13.7px;color:#333;line-height:18px">】</div>
<div class="tx" style="left:577px;top:263.5px;font-size:13.7px;color:#333;line-height:18px">攻击详情</div>
<svg class="abs" style="left:418px;top:293px" width="930" height="300" viewBox="418 293 930 300">
<polyline points="613.5,530 614.5,545 630,545" fill="none" stroke="#6ec71e" stroke-width="1"/>
<circle cx="613" cy="453" r="70" fill="none" stroke="#6ec71e" stroke-width="14"/>
<line x1="851" y1="373.4" x2="1291" y2="373.4" stroke="#cccccc" stroke-dasharray="4,4"/>
<text x="843" y="376.6" text-anchor="end" font-size="12.5" fill="#666" font-family="Liberation Sans">2,000</text>
<line x1="851" y1="415.8" x2="1291" y2="415.8" stroke="#cccccc" stroke-dasharray="4,4"/>
<text x="843" y="419.0" text-anchor="end" font-size="12.5" fill="#666" font-family="Liberation Sans">1,500</text>
<line x1="851" y1="458.3" x2="1291" y2="458.3" stroke="#cccccc" stroke-dasharray="4,4"/>
<text x="843" y="461.5" text-anchor="end" font-size="12.5" fill="#666" font-family="Liberation Sans">1,000</text>
<line x1="851" y1="500.7" x2="1291" y2="500.7" stroke="#cccccc" stroke-dasharray="4,4"/>
<text x="843" y="503.9" text-anchor="end" font-size="12.5" fill="#666" font-family="Liberation Sans">500</text>
<text x="843" y="546.3" text-anchor="end" font-size="12.5" fill="#666" font-family="Liberation Sans">0</text>
<rect x="895" y="382.8" width="57" height="160.3" fill="#4fa8f9"/>
<text x="923.5" y="375.0" text-anchor="middle" font-size="12.5" fill="#4fa8f9" font-family="Liberation Sans">1889</text>
<rect x="969" y="384.8" width="57" height="158.3" fill="#6ec71e"/>
<text x="997.5" y="377.0" text-anchor="middle" font-size="12.5" fill="#6ec71e" font-family="Liberation Sans">1866</text>
<rect x="1042.5" y="385.2" width="57" height="157.9" fill="#f56e6a"/>
<text x="1071.0" y="377.4" text-anchor="middle" font-size="12.5" fill="#f56e6a" font-family="Liberation Sans">1861</text>
<rect x="1116" y="385.2" width="57" height="157.9" fill="#fc8b40"/>
<text x="1144.5" y="377.4" text-anchor="middle" font-size="12.5" fill="#fc8b40" font-family="Liberation Sans">1861</text>
<rect x="1190" y="385.2" width="57" height="157.9" fill="#818af8"/>
<text x="1218.5" y="377.4" text-anchor="middle" font-size="12.5" fill="#818af8" font-family="Liberation Sans">1861</text>
<line x1="850.5" y1="543.5" x2="1291" y2="543.5" stroke="#333" stroke-width="1"/>
<line x1="851" y1="543" x2="851" y2="548" stroke="#333" stroke-width="1"/>
<text x="1071" y="562" text-anchor="middle" font-size="14.4" font-weight="bold" fill="#333" font-family="Liberation Sans">今日URI(TOP5)</text>
<rect x="838" y="318" width="25" height="14" rx="1" fill="#4fa8f9"/>
<text x="868" y="327.8" font-size="13" fill="#666" font-family="Liberation Sans">/nginx_status</text>
<rect x="954.5" y="318" width="25" height="14" rx="1" fill="#6ec71e"/>
<text x="984.5" y="327.8" font-size="13" fill="#666" font-family="Liberation Sans">/phpfpm_56_status</text>
<rect x="1104" y="318" width="25" height="14" rx="1" fill="#f56e6a"/>
<text x="1134" y="327.8" font-size="13" fill="#666" font-family="Liberation Sans">/phpfpm_73_status</text>
<rect x="838" y="342" width="25" height="14" rx="1" fill="#fc8b40"/>
<text x="868" y="351.8" font-size="13" fill="#666" font-family="Liberation Sans">/phpfpm_72_status</text>
<rect x="987.5" y="342" width="25" height="14" rx="1" fill="#818af8"/>
<text x="1017.5" y="351.8" font-size="13" fill="#666" font-family="Liberation Sans">/phpfpm_71_status</text>
</svg>
<div class="tx" style="left:513px;top:433px;width:200px;text-align:center;font-size:17px;font-weight:bold;color:#444;line-height:22px">当前IP总拦截数</div>
<div class="tx" style="left:513.5px;top:469.5px;width:200px;text-align:center;font-size:16px;color:#666;line-height:18px">13834</div>
<div class="lbl" style="left:633px;top:525px;color:#ccc">非浏览器请求</div>
<div class="lbl" style="left:633px;top:549px;color:#ccc">13834/次</div>
<div class="abs" style="left:438px;top:596px;width:882px;height:337px;overflow:hidden;border-left:1px solid #ddd;border-right:1px solid #ddd">
<div class="abs" style="left:0;top:35px;width:880px;height:34px;border-bottom:1px solid #ddd"></div>
<div class="tx" style="left:8px;top:42.8px;font-size:12.7px;color:#707070;line-height:18px">2021-08-09 14:28:02</div>
<div class="tx" style="left:211px;top:42.8px;font-size:12.1px;color:#707070;line-height:18px">127.0.0.1</div>
<div class="tx" style="left:346px;top:42.8px;font-size:12.7px;color:#707070;line-height:18px">/png</div>
<div class="tx" style="left:617px;top:42.8px;font-size:12px;color:#6a6a6a;line-height:18px">非浏览器请求</div>
<div class="tx g" style="left:800.5px;top:42.8px;font-size:12px;line-height:18px">详情</div>
<div class="tx" style="left:831.5px;top:42.8px;font-size:12px;color:#888;line-height:18px">|</div>
<div class="tx g" style="left:841.5px;top:42.8px;font-size:12px;line-height:18px">HTTP</div>
<div class="abs" style="left:0;top:69px;width:880px;height:34px;border-bottom:1px solid #ddd"></div>
<div class="tx" style="left:8px;top:76.8px;font-size:12.7px;color:#707070;line-height:18px">2021-08-09 14:27:52</div>
<div class="tx" style="left:211px;top:76.8px;font-size:12.1px;color:#707070;line-height:18px">127.0.0.1</div>
<div class="tx" style="left:346px;top:76.8px;font-size:12.7px;color:#707070;line-height:18px">/png</div>
<div class="tx" style="left:617px;top:76.8px;font-size:12px;color:#6a6a6a;line-height:18px">非浏览器请求</div>
<div class="tx g" style="left:800.5px;top:76.8px;font-size:12px;line-height:18px">详情</div>
<div class="tx" style="left:831.5px;top:76.8px;font-size:12px;color:#888;line-height:18px">|</div>
<div class="tx g" style="left:841.5px;top:76.8px;font-size:12px;line-height:18px">HTTP</div>
<div class="abs" style="left:0;top:103px;width:880px;height:34px;border-bottom:1px solid #ddd"></div>
<div class="tx" style="left:8px;top:110.8px;font-size:12.7px;color:#707070;line-height:18px">2021-08-09 14:24:50</div>
<div class="tx" style="left:211px;top:110.8px;font-size:12.1px;color:#707070;line-height:18px">127.0.0.1</div>
<div class="tx" style="left:346px;top:110.8px;font-size:12.7px;color:#707070;line-height:18px">/123/shuichi.png</div>
<div class="tx" style="left:617px;top:110.8px;font-size:12px;color:#6a6a6a;line-height:18px">非浏览器请求</div>
<div class="tx g" style="left:800.5px;top:110.8px;font-size:12px;line-height:18px">详情</div>
<div class="tx" style="left:831.5px;top:110.8px;font-size:12px;color:#888;line-height:18px">|</div>
<div class="tx g" style="left:841.5px;top:110.8px;font-size:12px;line-height:18px">HTTP</div>
<div class="abs" style="left:0;top:137px;width:880px;height:34px;border-bottom:1px solid #ddd"></div>
<div class="tx" style="left:8px;top:144.8px;font-size:12.7px;color:#707070;line-height:18px">2021-08-05 00:00:05</div>
<div class="tx" style="left:211px;top:144.8px;font-size:12.1px;color:#707070;line-height:18px">127.0.0.1</div>
<div class="tx" style="left:346px;top:144.8px;font-size:12.7px;color:#707070;line-height:18px">/phpfpm_71_status?json</div>
<div class="tx" style="left:617px;top:144.8px;font-size:12px;color:#6a6a6a;line-height:18px">非浏览器请求</div>
<div class="tx g" style="left:800.5px;top:144.8px;font-size:12px;line-height:18px">详情</div>
<div class="tx" style="left:831.5px;top:144.8px;font-size:12px;color:#888;line-height:18px">|</div>
<div class="tx g" style="left:841.5px;top:144.8px;font-size:12px;line-height:18px">HTTP</div>
<div class="abs" style="left:0;top:171px;width:880px;height:34px;border-bottom:1px solid #ddd"></div>
<div class="tx" style="left:8px;top:178.8px;font-size:12.7px;color:#707070;line-height:18px">2021-08-05 00:00:05</div>
<div class="tx" style="left:211px;top:178.8px;font-size:12.1px;color:#707070;line-height:18px">127.0.0.1</div>
<div class="tx" style="left:346px;top:178.8px;font-size:12.7px;color:#707070;line-height:18px">/phpfpm_73_status?json</div>
<div class="tx" style="left:617px;top:178.8px;font-size:12px;color:#6a6a6a;line-height:18px">非浏览器请求</div>
<div class="tx g" style="left:800.5px;top:178.8px;font-size:12px;line-height:18px">详情</div>
<div class="tx" style="left:831.5px;top:178.8px;font-size:12px;color:#888;line-height:18px">|</div>
<div class="tx g" style="left:841.5px;top:178.8px;font-size:12px;line-height:18px">HTTP</div>
<div class="abs" style="left:0;top:205px;width:880px;height:34px;border-bottom:1px solid #ddd"></div>
<div class="tx" style="left:8px;top:212.8px;font-size:12.7px;color:#707070;line-height:18px">2021-08-05 00:00:05</div>
<div class="tx" style="left:211px;top:212.8px;font-size:12.1px;color:#707070;line-height:18px">127.0.0.1</div>
<div class="tx" style="left:346px;top:212.8px;font-size:12.7px;color:#707070;line-height:18px">/phpfpm_74_status?json</div>
<div class="tx" style="left:617px;top:212.8px;font-size:12px;color:#6a6a6a;line-height:18px">非浏览器请求</div>
<div class="tx g" style="left:800.5px;top:212.8px;font-size:12px;line-height:18px">详情</div>
<div class="tx" style="left:831.5px;top:212.8px;font-size:12px;color:#888;line-height:18px">|</div>
<div class="tx g" style="left:841.5px;top:212.8px;font-size:12px;line-height:18px">HTTP</div>
<div class="abs" style="left:0;top:239px;width:880px;height:34px;border-bottom:1px solid #ddd"></div>
<div class="tx" style="left:8px;top:246.8px;font-size:12.7px;color:#707070;line-height:18px">2021-08-05 00:00:05</div>
<div class="tx" style="left:211px;top:246.8px;font-size:12.1px;color:#707070;line-height:18px">127.0.0.1</div>
<div class="tx" style="left:346px;top:246.8px;font-size:12.7px;color:#707070;line-height:18px">/phpfpm_72_status?json</div>
<div class="tx" style="left:617px;top:246.8px;font-size:12px;color:#6a6a6a;line-height:18px">非浏览器请求</div>
<div class="tx g" style="left:800.5px;top:246.8px;font-size:12px;line-height:18px">详情</div>
<div class="tx" style="left:831.5px;top:246.8px;font-size:12px;color:#888;line-height:18px">|</div>
<div class="tx g" style="left:841.5px;top:246.8px;font-size:12px;line-height:18px">HTTP</div>
<div class="abs" style="left:0;top:273px;width:880px;height:34px;border-bottom:1px solid #ddd"></div>
<div class="tx" style="left:8px;top:280.8px;font-size:12.7px;color:#707070;line-height:18px">2021-08-05 00:00:05</div>
<div class="tx" style="left:211px;top:280.8px;font-size:12.1px;color:#707070;line-height:18px">127.0.0.1</div>
<div class="tx" style="left:346px;top:280.8px;font-size:12.7px;color:#707070;line-height:18px">/phpfpm_53_status?json</div>
<div class="tx" style="left:617px;top:280.8px;font-size:12px;color:#6a6a6a;line-height:18px">非浏览器请求</div>
<div class="tx g" style="left:800.5px;top:280.8px;font-size:12px;line-height:18px">详情</div>
<div class="tx" style="left:831.5px;top:280.8px;font-size:12px;color:#888;line-height:18px">|</div>
<div class="tx g" style="left:841.5px;top:280.8px;font-size:12px;line-height:18px">HTTP</div>
<div class="abs" style="left:0;top:307px;width:880px;height:34px;border-bottom:1px solid #ddd"></div>
<div class="tx" style="left:8px;top:314.8px;font-size:12.7px;color:#707070;line-height:18px">2021-08-05 00:00:05</div>
<div class="tx" style="left:211px;top:314.8px;font-size:12.1px;color:#707070;line-height:18px">127.0.0.1</div>
<div class="tx" style="left:346px;top:314.8px;font-size:12.7px;color:#707070;line-height:18px">/phpfpm_70_status?json</div>
<div class="tx" style="left:617px;top:314.8px;font-size:12px;color:#6a6a6a;line-height:18px">非浏览器请求</div>
<div class="tx g" style="left:800.5px;top:314.8px;font-size:12px;line-height:18px">详情</div>
<div class="tx" style="left:831.5px;top:314.8px;font-size:12px;color:#888;line-height:18px">|</div>
<div class="tx g" style="left:841.5px;top:314.8px;font-size:12px;line-height:18px">HTTP</div>
<div class="abs" style="left:0;top:341px;width:880px;height:34px;border-bottom:1px solid #ddd"></div>
<div class="tx" style="left:8px;top:348.8px;font-size:12.7px;color:#707070;line-height:18px">2021-08-05 00:00:05</div>
<div class="tx" style="left:211px;top:348.8px;font-size:12.1px;color:#707070;line-height:18px">127.0.0.1</div>
<div class="tx" style="left:346px;top:348.8px;font-size:12.7px;color:#707070;line-height:18px">/phpfpm_70_status?json</div>
<div class="tx" style="left:617px;top:348.8px;font-size:12px;color:#6a6a6a;line-height:18px">非浏览器请求</div>
<div class="tx g" style="left:800.5px;top:348.8px;font-size:12px;line-height:18px">详情</div>
<div class="tx" style="left:831.5px;top:348.8px;font-size:12px;color:#888;line-height:18px">|</div>
<div class="tx g" style="left:841.5px;top:348.8px;font-size:12px;line-height:18px">HTTP</div>
<div class="abs" style="left:0;top:0;width:880px;height:35px;background:#f6f6f6;border-top:1px solid #ddd;border-bottom:1px solid #ddd;box-shadow:0 2px 4px rgba(0,0,0,.06)"></div>
<div class="tx" style="left:8px;top:8.5px;font-size:12px;color:#666;line-height:18px">攻击时间</div>
<div class="tx" style="left:211px;top:8.5px;font-size:12px;color:#666;line-height:18px">被保护网站</div>
<div class="tx" style="left:346px;top:8.5px;font-size:12px;color:#666;line-height:18px">URI</div>
<div class="tx" style="left:617px;top:8.5px;font-size:12px;color:#666;line-height:18px">保护类型</div>
<div class="tx" style="right:8px;top:8.5px;font-size:12px;color:#666;line-height:18px">操作</div>
</div>
<div class="abs" style="left:1321px;top:596px;width:7px;height:33px;border-radius:3.5px;background:#d0d0d0"></div>
<div class="abs" style="left:1331.5px;top:238.3px;width:29px;height:29px;border-radius:50%;background:#777;border:3px solid #fff"></div>
<svg class="abs" style="left:1331.5px;top:238.3px" width="29" height="29"><path d="M10.15,10.5 L18.55,18.9 M18.55,10.5 L10.15,18.9" stroke="#fff" stroke-width="2" stroke-linecap="round"/></svg>
</body></html>
